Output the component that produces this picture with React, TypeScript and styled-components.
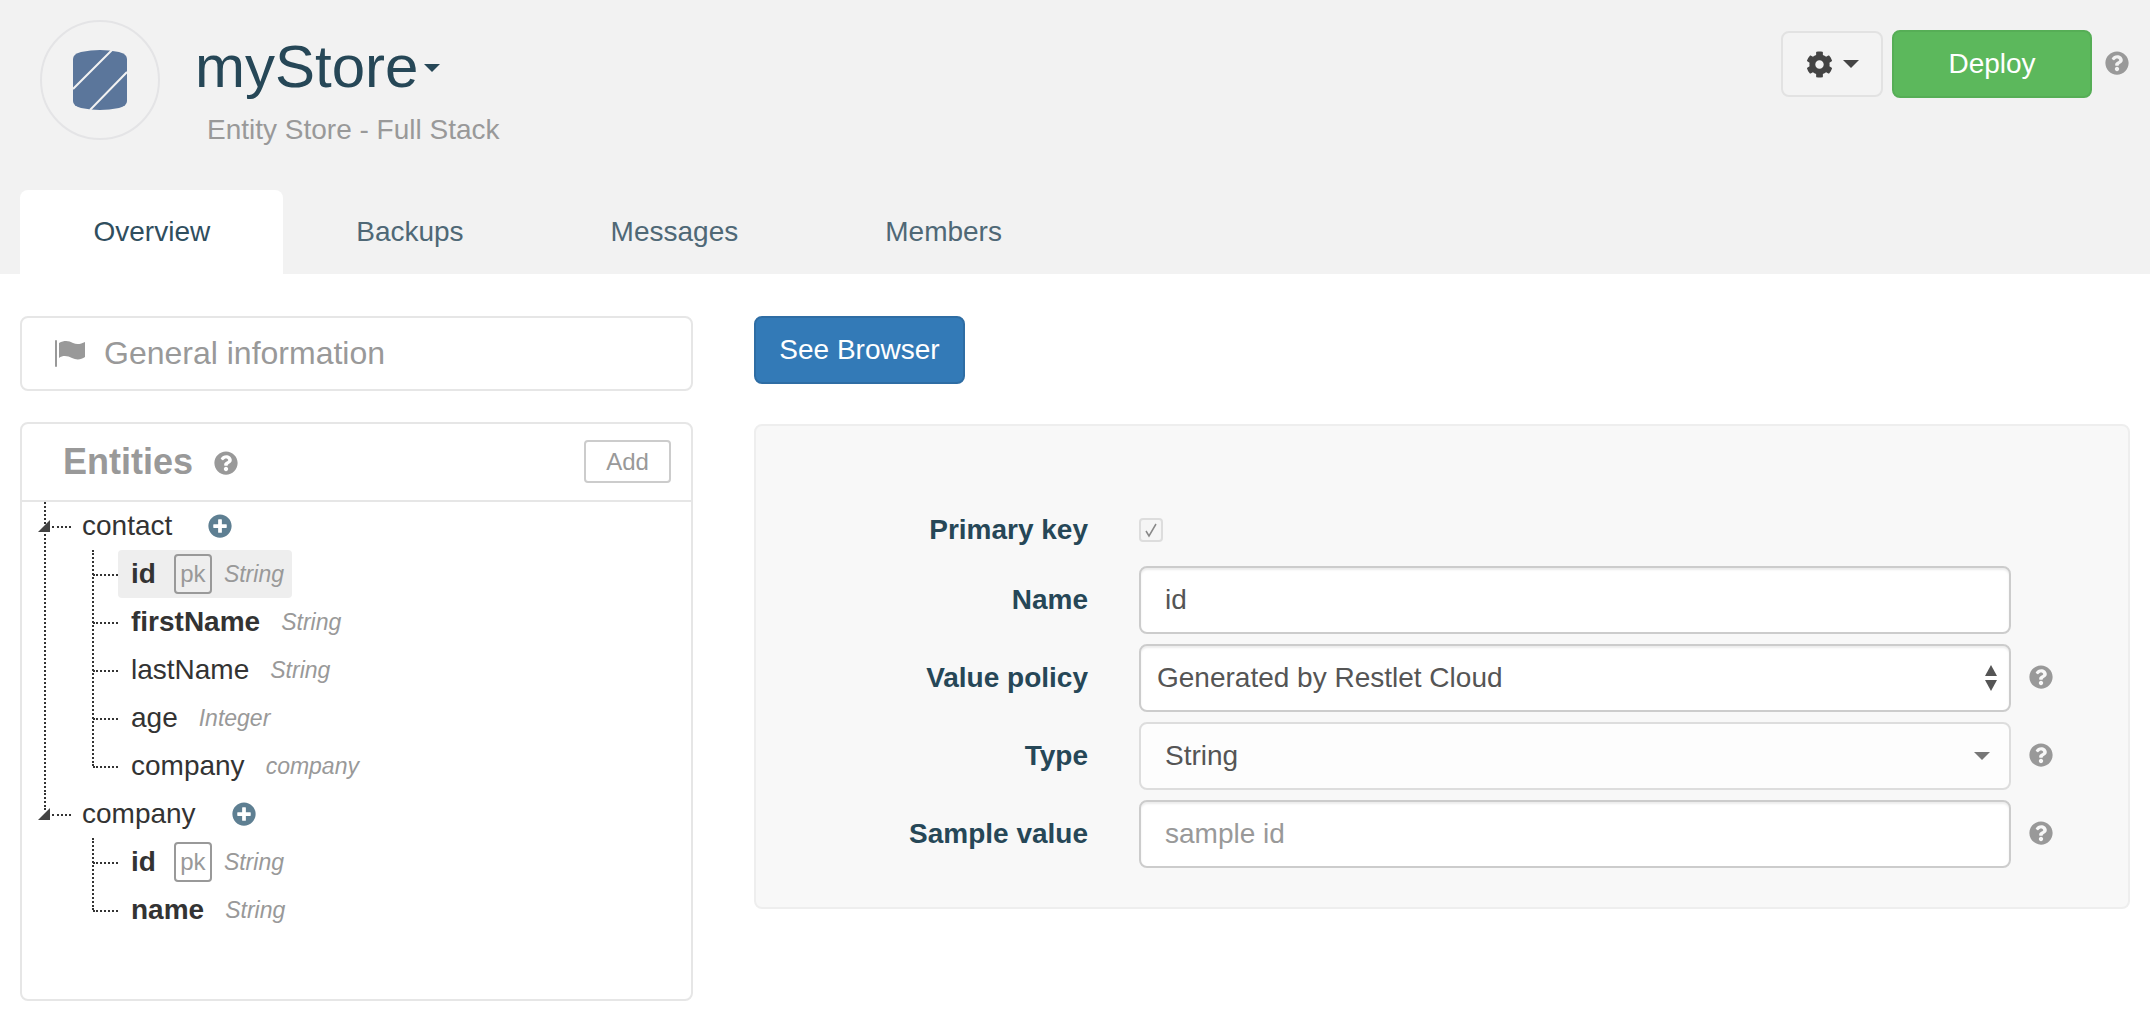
import React from 'react'
import styled, {createGlobalStyle} from 'styled-components'
import {FaCog, FaPlusCircle, FaQuestionCircle} from 'react-icons/fa'

const GlobalStyle = createGlobalStyle`
  html, body {
    margin: 0;
    padding: 0;
    background: #ffffff;
  }
  body {
    font-family: "Liberation Sans", Arial, sans-serif;
    font-size: 28px;
    color: #333333;
  }
  * {
    box-sizing: border-box;
  }
  ul {
    list-style: none;
    margin: 0;
    padding: 0;
  }
`

const Header = styled.header`
  height: 274px;
  background: #f2f2f2;
  display: flex;
  flex-direction: column;
  padding: 0 21px 0 20px;
`

const HeaderTop = styled.div`
  flex: 1;
  display: flex;
  justify-content: space-between;
  align-items: flex-start;
  padding-top: 20px;
`

const Brand = styled.div`
  display: flex;
  padding-left: 20px;
`

const LogoCircle = styled.div`
  width: 120px;
  height: 120px;
  border: 2px solid #e4e4e6;
  border-radius: 50%;
  display: flex;
  align-items: center;
  justify-content: center;
`

const TitleBlock = styled.div`
  margin-left: 35px;
  padding-top: 13px;
`

const Title = styled.h1`
  margin: 0;
  display: flex;
  align-items: center;
  font-size: 60px;
  line-height: 68px;
  font-weight: 400;
  color: #264757;
`

const Caret = styled.span<{$size: number; $color: string; $up?: boolean; $tall?: number}>`
  display: inline-block;
  width: 0;
  height: 0;
  border-left: ${p => p.$size}px solid transparent;
  border-right: ${p => p.$size}px solid transparent;
  border-top: ${p => (p.$up ? '0' : `${p.$tall ?? p.$size}px solid ${p.$color}`)};
  border-bottom: ${p => (p.$up ? `${p.$tall ?? p.$size}px solid ${p.$color}` : '0')};
`

const TitleCaret = styled(Caret)`
  margin-left: 6px;
  margin-top: 2px;
`

const Subtitle = styled.div`
  margin: 13px 0 0 12px;
  color: #999999;
  line-height: 32px;
`

const Actions = styled.div`
  display: flex;
  align-items: center;
  padding-top: 10px;
`

const GearButton = styled.button`
  width: 102px;
  height: 66px;
  border: 2px solid #e2e2e2;
  border-radius: 8px;
  background: #f3f3f3;
  color: #444444;
  display: flex;
  align-items: center;
  justify-content: center;
  gap: 10px;
  padding: 0;
  font-size: 27px;
`

const DeployButton = styled.button`
  width: 200px;
  height: 68px;
  margin-left: 9px;
  border: 2px solid #56ae56;
  border-radius: 8px;
  background: #5cb85c;
  color: #ffffff;
  font: inherit;
`

const HelpIcon = styled(FaQuestionCircle)<{$left?: number}>`
  flex: none;
  width: 24px;
  height: 24px;
  color: #999999;
  margin-left: ${p => p.$left ?? 0}px;
`

const RowHelp = styled(HelpIcon)`
  margin-bottom: 2px;
`

const TitleHelp = styled(HelpIcon)`
  margin-top: 2px;
`

const Tabs = styled.nav`
  display: flex;
  height: 84px;
`

const Tab = styled.a<{$active?: boolean}>`
  padding: 0 ${p => (p.$active ? 72.5 : 73.5)}px 0 73.5px;
  display: flex;
  align-items: center;
  border-radius: 8px 8px 0 0;
  color: ${p => (p.$active ? '#2f4e5e' : '#4f6876')};
  background: ${p => (p.$active ? '#ffffff' : 'transparent')};
`

const Main = styled.main`
  display: flex;
  gap: 61px;
  padding: 42px 20px 0 20px;
`

const LeftColumn = styled.div`
  flex: 0 0 673px;
`

const RightColumn = styled.div`
  flex: 1;
`

const Panel = styled.section`
  border: 2px solid #e6e6e6;
  border-radius: 8px;
  background: #ffffff;
`

const InfoPanel = styled(Panel)`
  height: 75px;
  padding-left: 33px;
  display: flex;
  align-items: center;
  font-size: 32px;
  color: #999999;
  gap: 19px;
`

const EntitiesPanel = styled(Panel)`
  height: 579px;
  margin-top: 31px;
`

const EntitiesHeader = styled.div`
  height: 78px;
  border-bottom: 2px solid #e6e6e6;
  display: flex;
  align-items: center;
  padding: 0 20px 0 41px;
`

const EntitiesTitle = styled.h2`
  margin: 0 21px 0 0;
  font-size: 36px;
  font-weight: 700;
  color: #999999;
`

const AddButton = styled.button`
  margin: -1px 0 0 auto;
  width: 87px;
  height: 43px;
  border: 2px solid #cccccc;
  border-radius: 4px;
  background: #ffffff;
  color: #999999;
  font: inherit;
  font-size: 24px;
  padding: 0;
`

const RootNode = styled.li<{$line: string}>`
  position: relative;
  &::before {
    content: '';
    position: absolute;
    left: 22px;
    top: 0;
    height: ${p => p.$line};
    border-left: 2px dotted #333333;
  }
`

const RootRow = styled.div`
  position: relative;
  height: 48px;
  padding-left: 60px;
  display: flex;
  align-items: center;
  &::before {
    content: '';
    position: absolute;
    left: 16px;
    top: 18px;
    width: 0;
    height: 0;
    border-left: 12px solid transparent;
    border-bottom: 12px solid #444444;
  }
  &::after {
    content: '';
    position: absolute;
    left: 30px;
    top: 24px;
    width: 19px;
    border-top: 2px dotted #333333;
  }
`

const PlusIcon = styled(FaPlusCircle)`
  width: 24px;
  height: 24px;
  margin-left: 36px;
  color: #5e7f92;
`

const ChildList = styled.ul`
  position: relative;
  padding-left: 96px;
  &::before {
    content: '';
    position: absolute;
    left: 70px;
    top: 0;
    bottom: 24px;
    border-left: 2px dotted #333333;
  }
`

const ChildRow = styled.li<{$selected?: boolean}>`
  position: relative;
  height: 48px;
  width: fit-content;
  padding: 0 8px 0 13px;
  display: flex;
  align-items: center;
  border-radius: 4px;
  background: ${p => (p.$selected ? '#eeeeee' : 'transparent')};
  &::before {
    content: '';
    position: absolute;
    left: -25px;
    top: 24px;
    width: 25px;
    border-top: 2px dotted #333333;
  }
`

const FieldName = styled.span<{$key?: boolean}>`
  font-weight: ${p => (p.$key ? 700 : 400)};
`

const PkBadge = styled.span`
  width: 38px;
  height: 40px;
  margin: 0 12px 0 18px;
  border: 2px solid #999999;
  border-radius: 4px;
  color: #999999;
  font-size: 24px;
  display: flex;
  align-items: center;
  justify-content: center;
`

const FieldType = styled.em<{$gap: number}>`
  margin-left: ${p => p.$gap}px;
  font-size: 23px;
  color: #999999;
`

const BrowserButton = styled.button`
  width: 211px;
  height: 68px;
  border: 2px solid #2e6da4;
  border-radius: 8px;
  background: #337ab7;
  color: #ffffff;
  font: inherit;
  padding: 0;
  display: block;
`

const FormPanel = styled.form`
  height: 485px;
  margin-top: 40px;
  padding-top: 77px;
  border: 2px solid #eeeeee;
  border-radius: 8px;
  background: #f8f8f8;
  display: flex;
  flex-direction: column;
  gap: 10px;
`

const FormRow = styled.div<{$compact?: boolean}>`
  display: flex;
  align-items: center;
  height: ${p => (p.$compact ? 53 : 68)}px;
`

const FieldLabel = styled.label`
  flex: 0 0 332px;
  margin-right: 51px;
  text-align: right;
  font-weight: 700;
  color: #264757;
`

const CheckBox = styled.span`
  width: 24px;
  height: 24px;
  border: 2px solid #dddddd;
  border-radius: 4px;
  background: #f5f5f5;
  display: flex;
  align-items: center;
  justify-content: center;
`

const TextInput = styled.input`
  width: 872px;
  height: 68px;
  padding: 0 24px;
  border: 2px solid #cccccc;
  border-radius: 8px;
  background: #ffffff;
  box-shadow: inset 0 2px 2px rgba(0, 0, 0, 0.075);
  color: #555555;
  font: inherit;
  outline: none;
  &::placeholder {
    color: #999999;
    opacity: 1;
  }
`

const SelectBox = styled.div<{$soft?: boolean}>`
  width: 872px;
  height: 68px;
  padding: 0 ${p => (p.$soft ? 19 : 12)}px 0 ${p => (p.$soft ? 24 : 16)}px;
  border: 2px solid ${p => (p.$soft ? '#dddddd' : '#cccccc')};
  border-radius: 8px;
  background: ${p => (p.$soft ? '#fdfdfd' : '#ffffff')};
  box-shadow: ${p => (p.$soft ? 'none' : 'inset 0 2px 2px rgba(0, 0, 0, 0.075)')};
  color: #555555;
  display: flex;
  align-items: center;
  justify-content: space-between;
`

const Stepper = styled.span`
  display: flex;
  flex-direction: column;
  gap: 4px;
`

const Logo = () => (
  <svg width="54" height="60" viewBox="0 0 54 60">
    <path
      d="M0 9Q0 4 8 2Q18 0 27 0Q36 0 46 2Q54 4 54 9V51Q54 56 46 58Q36 60 27 60Q18 60 8 58Q0 56 0 51Z"
      fill="#5b769b"
    />
    <path d="M39 0L0 39M54 22L17 60" stroke="#f2f2f2" strokeWidth="2" fill="none" />
  </svg>
)

const FlagIcon = () => (
  <svg width="30" height="27" viewBox="0 0 30 27">
    <rect x="0" y="0" width="2" height="27" rx="1" fill="#999999" />
    <path d="M4 3C10 0 14 1 18 3C22 5 26 4 30 2V17C26 20 21 20 17 18C13 16 8 15 4 18Z" fill="#999999" />
  </svg>
)

const CheckMark = () => (
  <svg width="16" height="16" viewBox="0 0 16 16">
    <path d="M3 9L6 14L13 2" stroke="#888888" strokeWidth="1.5" fill="none" />
  </svg>
)

const tabs = ['Overview', 'Backups', 'Messages', 'Members']

type Field = {name: string; type: string; key?: boolean; pk?: boolean; selected?: boolean}

const entities: Array<{name: string; line: string; fields: Array<Field>}> = [
  {
    name: 'contact',
    line: '290px',
    fields: [
      {name: 'id', type: 'String', key: true, pk: true, selected: true},
      {name: 'firstName', type: 'String', key: true},
      {name: 'lastName', type: 'String'},
      {name: 'age', type: 'Integer'},
      {name: 'company', type: 'company'},
    ],
  },
  {
    name: 'company',
    line: '20px',
    fields: [
      {name: 'id', type: 'String', key: true, pk: true},
      {name: 'name', type: 'String', key: true},
    ],
  },
]

export default function App() {
  return (
    <>
      <GlobalStyle />
      <Header>
        <HeaderTop>
          <Brand>
            <LogoCircle>
              <Logo />
            </LogoCircle>
            <TitleBlock>
              <Title>
                myStore
                <TitleCaret $size={8} $color="#264757" />
              </Title>
              <Subtitle>Entity Store - Full Stack</Subtitle>
            </TitleBlock>
          </Brand>
          <Actions>
            <GearButton>
              <FaCog />
              <Caret $size={8} $color="#444444" />
            </GearButton>
            <DeployButton>Deploy</DeployButton>
            <RowHelp $left={13} />
          </Actions>
        </HeaderTop>
        <Tabs>
          {tabs.map((tab, index) => (
            <Tab key={tab} $active={index === 0}>
              {tab}
            </Tab>
          ))}
        </Tabs>
      </Header>
      <Main>
        <LeftColumn>
          <InfoPanel>
            <FlagIcon />
            General information
          </InfoPanel>
          <EntitiesPanel>
            <EntitiesHeader>
              <EntitiesTitle>Entities</EntitiesTitle>
              <TitleHelp />
              <AddButton>Add</AddButton>
            </EntitiesHeader>
            <ul>
              {entities.map(entity => (
                <RootNode key={entity.name} $line={entity.line}>
                  <RootRow>
                    {entity.name}
                    <PlusIcon />
                  </RootRow>
                  <ChildList>
                    {entity.fields.map(field => (
                      <ChildRow key={field.name} $selected={field.selected}>
                        <FieldName $key={field.key}>{field.name}</FieldName>
                        {field.pk && <PkBadge>pk</PkBadge>}
                        <FieldType $gap={field.pk ? 0 : 21}>{field.type}</FieldType>
                      </ChildRow>
                    ))}
                  </ChildList>
                </RootNode>
              ))}
            </ul>
          </EntitiesPanel>
        </LeftColumn>
        <RightColumn>
          <BrowserButton>See Browser</BrowserButton>
          <FormPanel>
            <FormRow $compact>
              <FieldLabel>Primary key</FieldLabel>
              <CheckBox>
                <CheckMark />
              </CheckBox>
            </FormRow>
            <FormRow>
              <FieldLabel>Name</FieldLabel>
              <TextInput readOnly value="id" />
            </FormRow>
            <FormRow>
              <FieldLabel>Value policy</FieldLabel>
              <SelectBox>
                Generated by Restlet Cloud
                <Stepper>
                  <Caret $size={6} $tall={11} $color="#555555" $up />
                  <Caret $size={6} $tall={11} $color="#555555" />
                </Stepper>
              </SelectBox>
              <RowHelp $left={18} />
            </FormRow>
            <FormRow>
              <FieldLabel>Type</FieldLabel>
              <SelectBox $soft>
                String
                <Caret $size={8} $color="#777777" />
              </SelectBox>
              <RowHelp $left={18} />
            </FormRow>
            <FormRow>
              <FieldLabel>Sample value</FieldLabel>
              <TextInput readOnly placeholder="sample id" />
              <RowHelp $left={18} />
            </FormRow>
          </FormPanel>
        </RightColumn>
      </Main>
    </>
  )
}
